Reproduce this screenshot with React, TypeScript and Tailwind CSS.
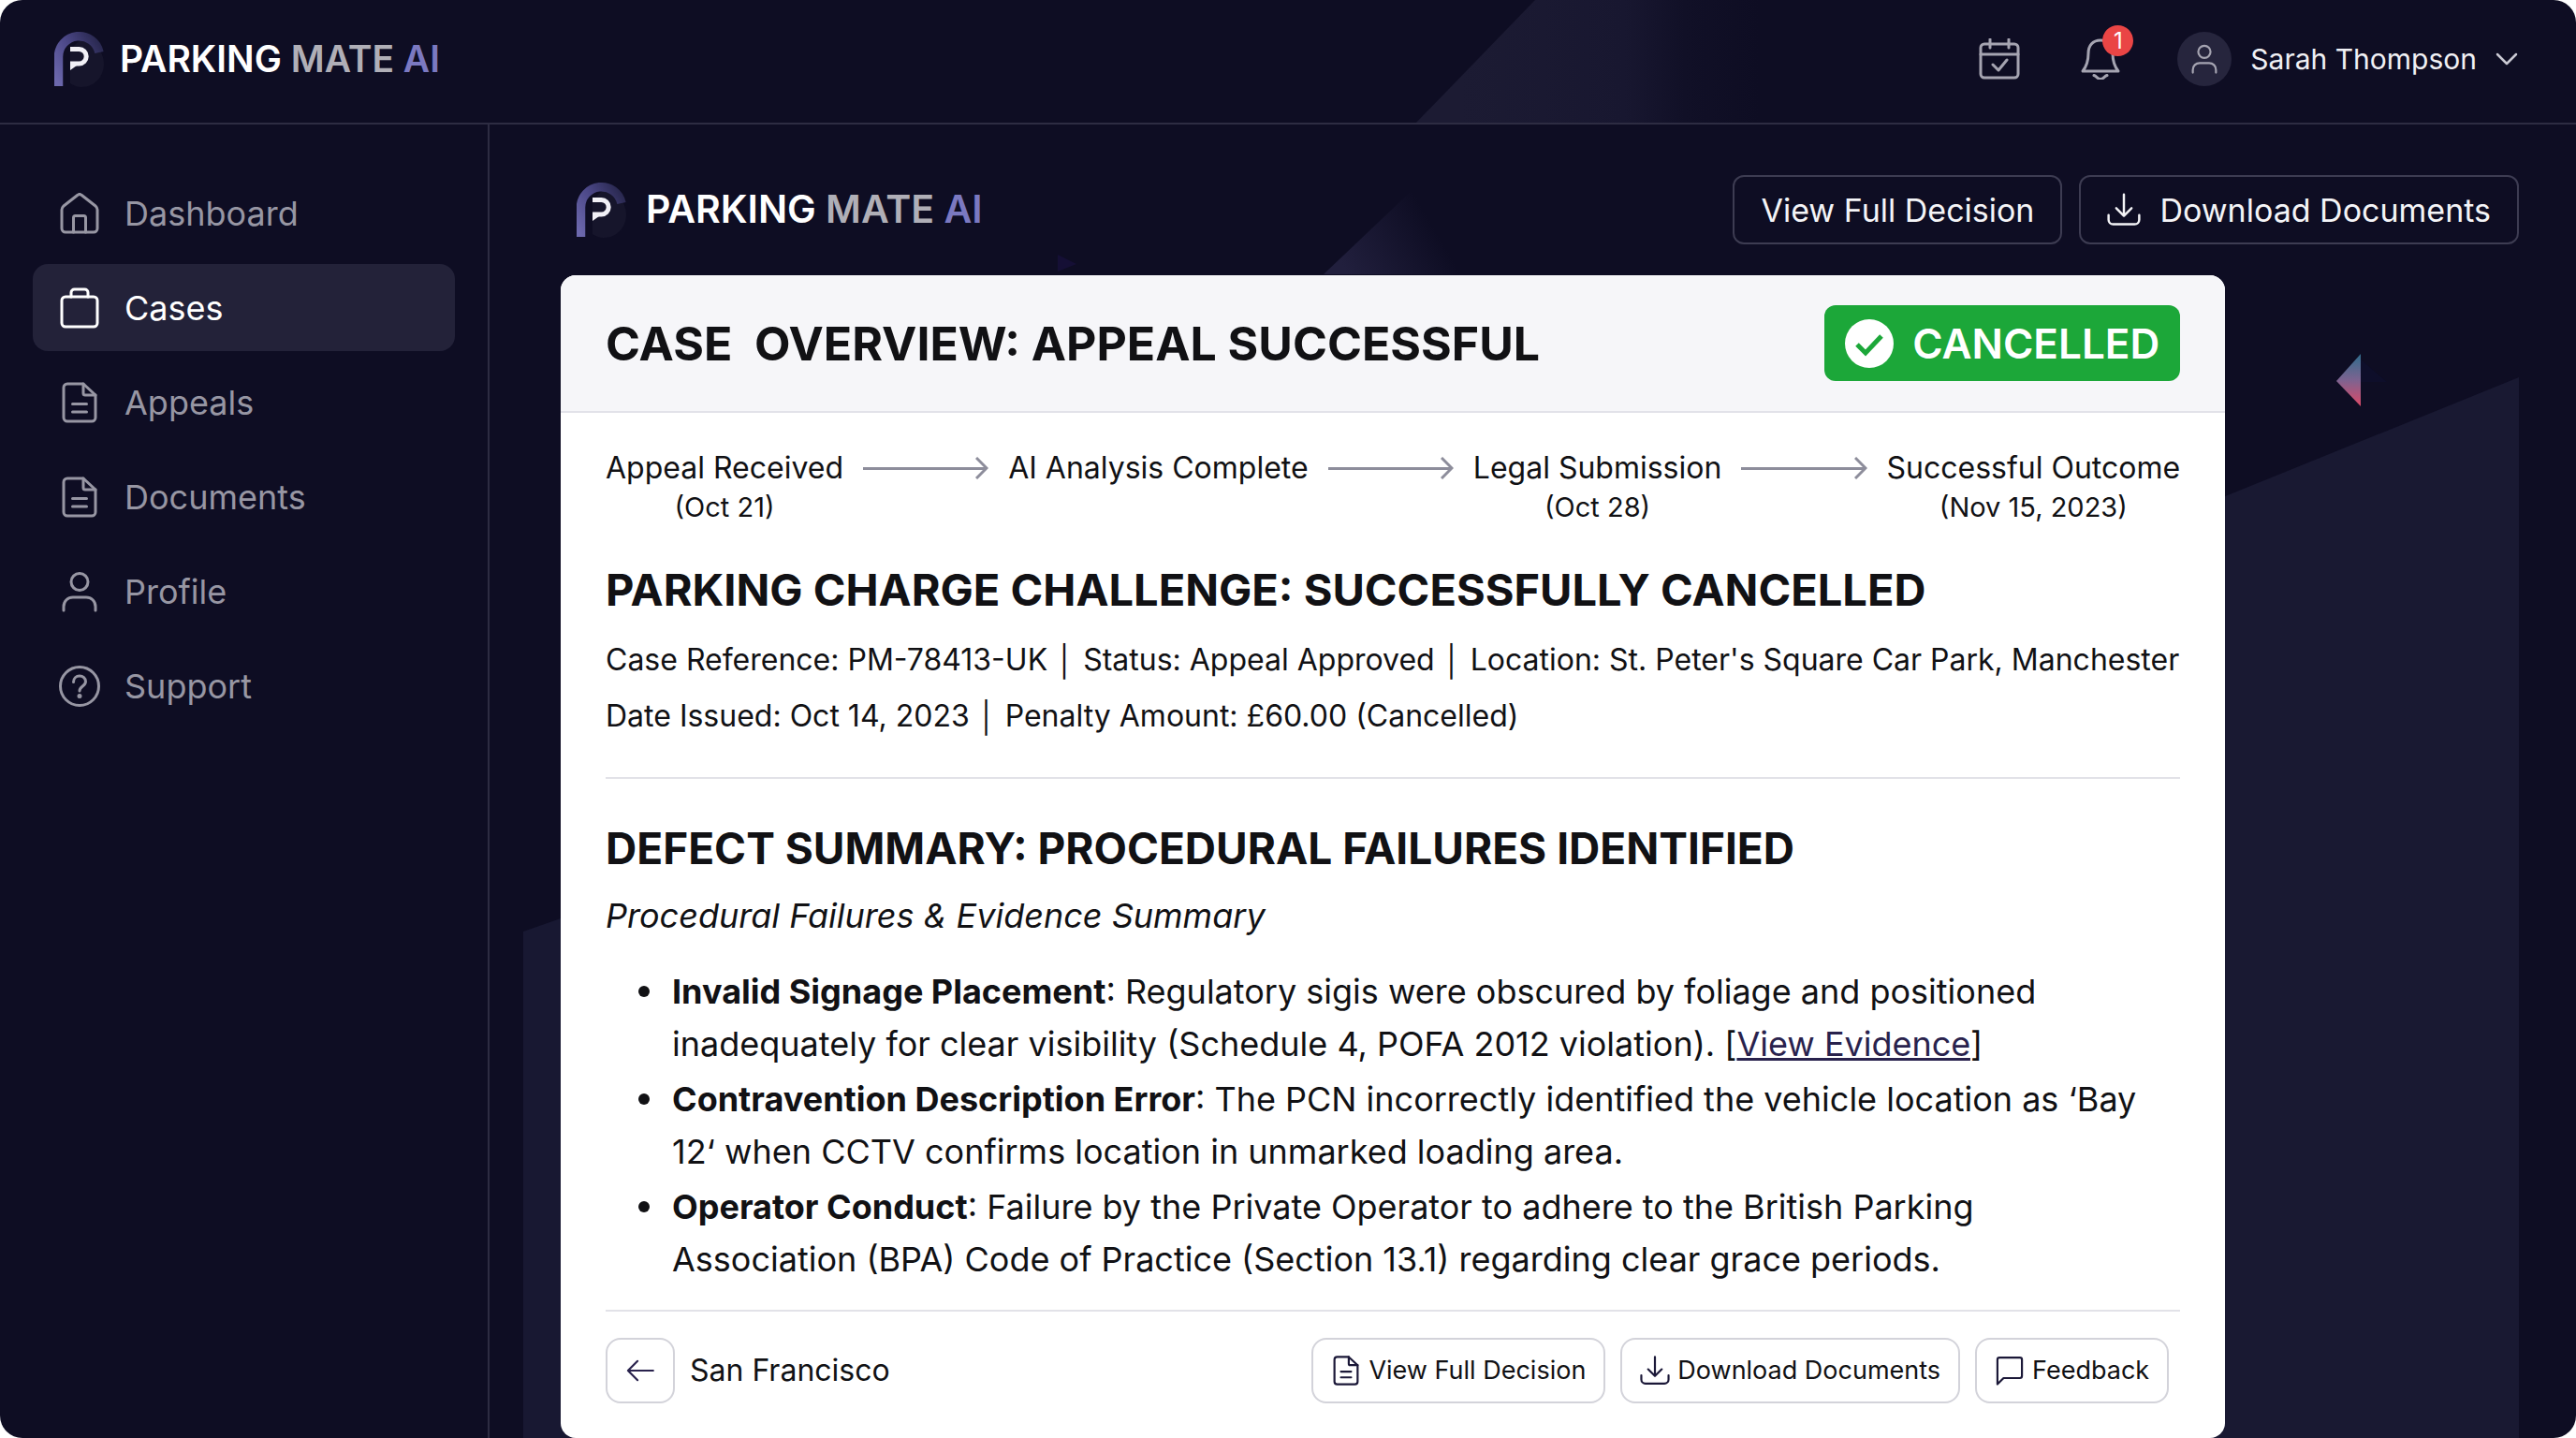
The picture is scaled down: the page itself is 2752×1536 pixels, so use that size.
import type { ReactNode } from 'react'

type IconProps = { className?: string; children?: ReactNode }

const Icon = ({ className = 'h-11 w-11', children }: IconProps) => (
    <svg viewBox="0 0 44 44" fill="none" stroke="currentColor" strokeWidth="3" strokeLinecap="round" strokeLinejoin="round" className={`shrink-0 ${className}`} aria-hidden="true">
        {children}
    </svg>
)

const HomeIcon = () => (
    <Icon>
        <path d="M3 18c0-1.500.6-2.700 1.700-3.700L20 2.300c1.200-1 2.800-1 4 0l15.300 12c1.100 1 1.700 2.200 1.700 3.700V38c0 2.200-1.800 4-4 4H7c-2.200 0-4-1.800-4-4z" />
        <path d="M15.500 42V26.500c0-1.100.9-2 2-2h9c1.100 0 2 .9 2 2V42" />
    </Icon>
)

const CaseIcon = () => (
    <Icon>
        <rect x="3" y="10" width="38" height="32" rx="4" />
        <path d="M13 10V5.500C13 3.600 14.600 2 16.500 2h11C29.400 2 31 3.600 31 5.500V10" />
    </Icon>
)

const FileIcon = ({ className }: IconProps) => (
    <Icon className={className}>
        <path d="M26 2H9C6.800 2 5 3.800 5 6v32c0 2.200 1.800 4 4 4h26c2.200 0 4-1.800 4-4V14z" />
        <path d="M26 2v10c0 1.100.9 2 2 2h11M14.500 23.500h15M14.500 32h15" />
    </Icon>
)

const UserIcon = ({ className }: IconProps) => (
    <Icon className={className}>
        <circle cx="22" cy="11.500" r="9" />
        <path d="M5 42v-4c0-6 4.500-10 10-10h14c5.500 0 10 4 10 10v4" />
    </Icon>
)

const HelpIcon = () => (
    <Icon>
        <circle cx="22" cy="22" r="20.500" />
        <path d="M15.500 17.500c0-4 3-6.500 6.500-6.500s6.500 2.500 6.500 6c0 5-6.500 5-6.500 10" />
        <circle cx="22" cy="32.500" r="1" fill="currentColor" />
    </Icon>
)

const DownloadIcon = ({ className }: IconProps) => (
    <Icon className={className}>
        <path d="M22 2v27M12 20l10 10 10-10M2 29v6c0 3.300 2.700 6 6 6h28c3.300 0 6-2.700 6-6v-6" />
    </Icon>
)

const Logo = () => (
    <svg viewBox="0 0 54 60" className="h-[60px] w-[54px] shrink-0" fill="none" aria-hidden="true">
        <defs>
            <linearGradient id="arch" x1="0" y1="50" x2="54" y2="16" gradientUnits="userSpaceOnUse">
                <stop offset="0" stopColor="#6c68ad" />
                <stop offset="0.500" stopColor="#4b4787" />
                <stop offset="1" stopColor="#26254a" />
            </linearGradient>
        </defs>
        <path d="M27 10a25 25 0 0 1 26 25c0 14-10 25-24 25-5 0-9-2-12-4V20z" fill="#16152b" />
        <path d="M4.500 59V27.500a22 22 0 0 1 43.500-4.500" stroke="url(#arch)" strokeWidth="9.500" />
        <path d="M17 19.500h9.500a7.700 7.700 0 0 1 0 15.400H17" stroke="#f1f0f6" strokeWidth="5" />
        <path d="M17 33v9l7-5z" fill="#f1f0f6" />
    </svg>
)

const Brand = ({ className }: { className: string }) => (
    <div className={`flex items-center ${className}`}>
        <Logo />
        <p className="font-semibold whitespace-nowrap text-white">
            PARKING <span className="text-[#b0afb7]">MATE</span> <span className="text-[#7b79c1]">AI</span>
        </p>
    </div>
)

const menu = [
    { label: 'Dashboard', icon: <HomeIcon /> },
    { label: 'Cases', icon: <CaseIcon />, active: true },
    { label: 'Appeals', icon: <FileIcon /> },
    { label: 'Documents', icon: <FileIcon /> },
    { label: 'Profile', icon: <UserIcon /> },
    { label: 'Support', icon: <HelpIcon /> },
]

const steps = [
    { title: 'Appeal Received', date: '(Oct 21)' },
    { title: 'AI Analysis Complete', date: '' },
    { title: 'Legal Submission', date: '(Oct 28)' },
    { title: 'Successful Outcome', date: '(Nov 15, 2023)' },
]

const defects = [
    {
        name: 'Invalid Signage Placement',
        text: 'Regulatory sigis were obscured by foliage and positioned inadequately for clear visibility (Schedule 4, POFA 2012 violation).',
        evidence: true,
    },
    {
        name: 'Contravention Description Error',
        text: 'The PCN incorrectly identified the vehicle location as ‘Bay 12‘ when CCTV confirms location in unmarked loading area.',
    },
    {
        name: 'Operator Conduct',
        text: 'Failure by the Private Operator to adhere to the British Parking Association (BPA) Code of Practice (Section 13.1) regarding clear grace periods.',
    },
]

const Backdrop = () => (
    <svg viewBox="0 0 2752 1536" preserveAspectRatio="none" className="absolute inset-0 h-full w-full" aria-hidden="true">
        <defs>
            <linearGradient id="beam" x1="1560" y1="0" x2="1880" y2="0" gradientUnits="userSpaceOnUse">
                <stop offset="0" stopColor="#1c1b33" />
                <stop offset="0.550" stopColor="#181730" />
                <stop offset="0.750" stopColor="#111027" />
                <stop offset="1" stopColor="#0e0d23" />
            </linearGradient>
            <linearGradient id="glow" x1="1440" y1="293" x2="1530" y2="240" gradientUnits="userSpaceOnUse">
                <stop offset="0" stopColor="#211f3d" />
                <stop offset="1" stopColor="#0e0d23" />
            </linearGradient>
            <linearGradient id="gem" x1="0" y1="378" x2="0" y2="434" gradientUnits="userSpaceOnUse">
                <stop offset="0" stopColor="#2f6c8c" />
                <stop offset="0.500" stopColor="#7d6390" />
                <stop offset="1" stopColor="#dc4a68" />
            </linearGradient>
        </defs>
        <path d="M1640 0h240v132h-368z" fill="url(#beam)" />
        <path d="M1512 200l100 93h-198z" fill="url(#glow)" />
        <path d="M1130 272l20 10-20 8z" fill="#150f35" />
        <path d="M559 995l60-21v562h-60z" fill="#181832" />
        <path d="M2360 537l331-134v1133h-331z" fill="#191932" />
        <path d="M2522 378v56l-26-27z" fill="url(#gem)" />
        <path d="M2522 384l28 24h-28z" fill="#0e0e2a" />
    </svg>
)

const App = () => {
    return (
        <div className="min-h-screen bg-white font-['Inter','Liberation_Sans',sans-serif]">
            <div className="relative flex min-h-screen flex-col overflow-hidden rounded-3xl bg-[#0e0d23]">
                <Backdrop />
                <header className="relative flex items-center justify-between border-b-2 border-[#2d2c42] pt-[33px] pr-[62px] pb-[38px] pl-[58px]">
                    <Brand className="gap-4 text-[39px]" />
                    <div className="flex items-center text-[#a5a4b1]">
                        <button aria-label="Calendar">
                            <Icon>
                                <rect x="2" y="6" width="40" height="36" rx="4" />
                                <path d="M2 17h40M12 1v9M32 1v9M15 28l6 6 9-11" />
                            </Icon>
                        </button>
                        <button aria-label="Notifications" className="relative ml-16">
                            <Icon>
                                <path d="M22 2C13.500 2 9 8 9 16c0 9-2 14-6 19h38c-4-5-6-10-6-19 0-8-4.500-14-13-14z" />
                                <path d="M15 39.500c3 1 4 4 7 4s4-3 7-4" />
                            </Icon>
                            <span className="absolute -top-3.5 left-6 flex h-[33px] w-[33px] items-center justify-center rounded-full bg-[#ea4545] text-2xl text-white">1</span>
                        </button>
                        <button className="ml-[60px] flex items-center">
                            <span className="flex h-[58px] w-[58px] items-center justify-center rounded-full bg-[#26253d]">
                                <UserIcon className="h-8 w-8" />
                            </span>
                            <span className="ml-5 text-[30px] whitespace-nowrap text-[#f0f0f4]">Sarah Thompson</span>
                            <svg viewBox="0 0 24 14" fill="none" stroke="#c9c8d2" strokeWidth="2.500" strokeLinecap="round" strokeLinejoin="round" className="ml-5 h-3.5 w-6" aria-hidden="true">
                                <path d="M2 2l10 10L22 2" />
                            </svg>
                        </button>
                    </div>
                </header>

                <div className="relative flex flex-1">
                    <nav className="flex w-[523px] shrink-0 flex-col gap-2 border-r-2 border-[#2d2c42] px-[35px] pt-12">
                        {menu.map((item) => (
                            <a
                                key={item.label}
                                href="#"
                                className={`flex h-[93px] items-center gap-[26px] rounded-2xl px-7 text-4xl ${item.active ? 'bg-[#232239] text-white' : 'text-[#9796a3]'}`}
                            >
                                {item.icon}
                                {item.label}
                            </a>
                        ))}
                    </nav>

                    <main className="flex min-w-0 flex-1 flex-col pt-[54px] pr-[61px] pl-[76px]">
                        <div className="flex items-center justify-between pl-[17px]">
                            <Brand className="gap-5 text-[41px]" />
                            <div className="flex gap-[18px] text-[34px] whitespace-nowrap text-[#f4f4f7]">
                                <button className="h-[74px] rounded-xl border-2 border-[#3d3c52] px-7">View Full Decision</button>
                                <button className="flex h-[74px] items-center gap-5 rounded-xl border-2 border-[#3d3c52] px-7">
                                    <DownloadIcon className="h-9 w-9" />
                                    Download Documents
                                </button>
                            </div>
                        </div>

                        <section className="mt-[33px] flex w-[85%] flex-1 flex-col rounded-2xl bg-white text-[#111114]">
                            <div className="flex items-center justify-between rounded-t-2xl border-b-2 border-[#e2e2e9] bg-[#f6f6f9] px-12 py-8">
                                <h1 className="text-[50px] leading-[80px] font-bold whitespace-pre">CASE  OVERVIEW: APPEAL SUCCESSFUL</h1>
                                <p className="flex h-[81px] items-center gap-5 rounded-xl bg-[#1ca739] px-[22px] text-[44px] font-semibold text-white">
                                    <svg viewBox="0 0 52 52" className="h-[52px] w-[52px]" aria-hidden="true">
                                        <circle cx="26" cy="26" r="26" fill="#fff" />
                                        <path d="M13 27l9 9 17-18" fill="none" stroke="#1ca739" strokeWidth="5" />
                                    </svg>
                                    CANCELLED
                                </p>
                            </div>

                            <div className="flex flex-1 flex-col px-12">
                                <ol className="mt-[35px] flex items-start">
                                    {steps.map((step, i) => (
                                        <li key={step.title} className={`flex items-start ${i > 0 ? 'flex-auto' : ''}`}>
                                            {i > 0 && (
                                                <span className="mx-[21px] flex h-12 flex-1 items-center text-[#8d8d9b]">
                                                    <span className="h-[3px] flex-1 bg-current" />
                                                    <svg viewBox="0 0 14 24" fill="none" stroke="currentColor" strokeWidth="3" className="-ml-3 h-6 w-3.5" aria-hidden="true">
                                                        <path d="M1 1l11 11L1 23" />
                                                    </svg>
                                                </span>
                                            )}
                                            <span className="flex flex-col items-center whitespace-nowrap">
                                                <span className="text-[32px] leading-[48px]">{step.title}</span>
                                                <span className="text-[29px] leading-9">{step.date}</span>
                                            </span>
                                        </li>
                                    ))}
                                </ol>

                                <h2 className="mt-[38px] text-[47px] leading-[64px] font-bold">PARKING CHARGE CHALLENGE: SUCCESSFULLY CANCELLED</h2>
                                <div className="mt-[13px] text-[32px] leading-[60px] whitespace-nowrap">
                                    <p>Case Reference: PM-78413-UK │ Status: Appeal Approved │ Location: St. Peter's Square Car Park, Manchester</p>
                                    <p>Date Issued: Oct 14, 2023 │ Penalty Amount: £60.00 (Cancelled)</p>
                                </div>

                                <hr className="mt-[35px] border-t-2 border-[#e2e2e8]" />

                                <h2 className="mt-[42px] text-[46px] leading-[64px] font-bold">DEFECT SUMMARY: PROCEDURAL FAILURES IDENTIFIED</h2>
                                <p className="mt-3 text-[36px] leading-[56px] italic">Procedural Failures &amp; Evidence Summary</p>
                                <ul className="mt-[25px] flex flex-col gap-[3px] pr-6 pl-[35px] text-[36px] leading-[56px]">
                                    {defects.map((item) => (
                                        <li key={item.name} className="flex gap-6">
                                            <span className="mt-[22px] h-3 w-3 shrink-0 rounded-full bg-[#111114]" />
                                            <p>
                                                <strong>{item.name}</strong>: {item.text}
                                                {item.evidence && (
                                                    <>
                                                        {' '}
                                                        [<a href="#" className="text-[#29224d] underline">View Evidence</a>]
                                                    </>
                                                )}
                                            </p>
                                        </li>
                                    ))}
                                </ul>

                                <hr className="mt-[26px] border-t-2 border-[#e2e2e8]" />

                                <div className="flex items-center justify-between pt-7 pr-3 pb-7">
                                    <div className="flex items-center gap-4">
                                        <button aria-label="Back" className="flex h-[70px] w-[74px] items-center justify-center rounded-2xl border-2 border-[#d3d3da] text-[#29224d]">
                                            <Icon className="h-8 w-8">
                                                <path d="M41 22H4M18 8L4 22l14 14" />
                                            </Icon>
                                        </button>
                                        <p className="text-[32px]">San Francisco</p>
                                    </div>
                                    <div className="flex gap-4 text-[27px] whitespace-nowrap">
                                        <button className="flex h-[70px] items-center gap-2 rounded-2xl border-2 border-[#d3d3da] px-[19px]">
                                            <FileIcon className="h-8 w-8 text-[#1b1838]" />
                                            View Full Decision
                                        </button>
                                        <button className="flex h-[70px] items-center gap-2 rounded-2xl border-2 border-[#d3d3da] px-[19px]">
                                            <DownloadIcon className="h-8 w-8 text-[#1b1838]" />
                                            Download Documents
                                        </button>
                                        <button className="flex h-[70px] items-center gap-2 rounded-2xl border-2 border-[#d3d3da] px-[19px]">
                                            <Icon className="h-8 w-8 text-[#1b1838]">
                                                <path d="M4 42V6c0-1.700 1.300-3 3-3h30c1.700 0 3 1.300 3 3v24c0 1.700-1.300 3-3 3H13z" />
                                            </Icon>
                                            Feedback
                                        </button>
                                    </div>
                                </div>
                            </div>
                        </section>
                    </main>
                </div>
            </div>
        </div>
    )
}

export default App
